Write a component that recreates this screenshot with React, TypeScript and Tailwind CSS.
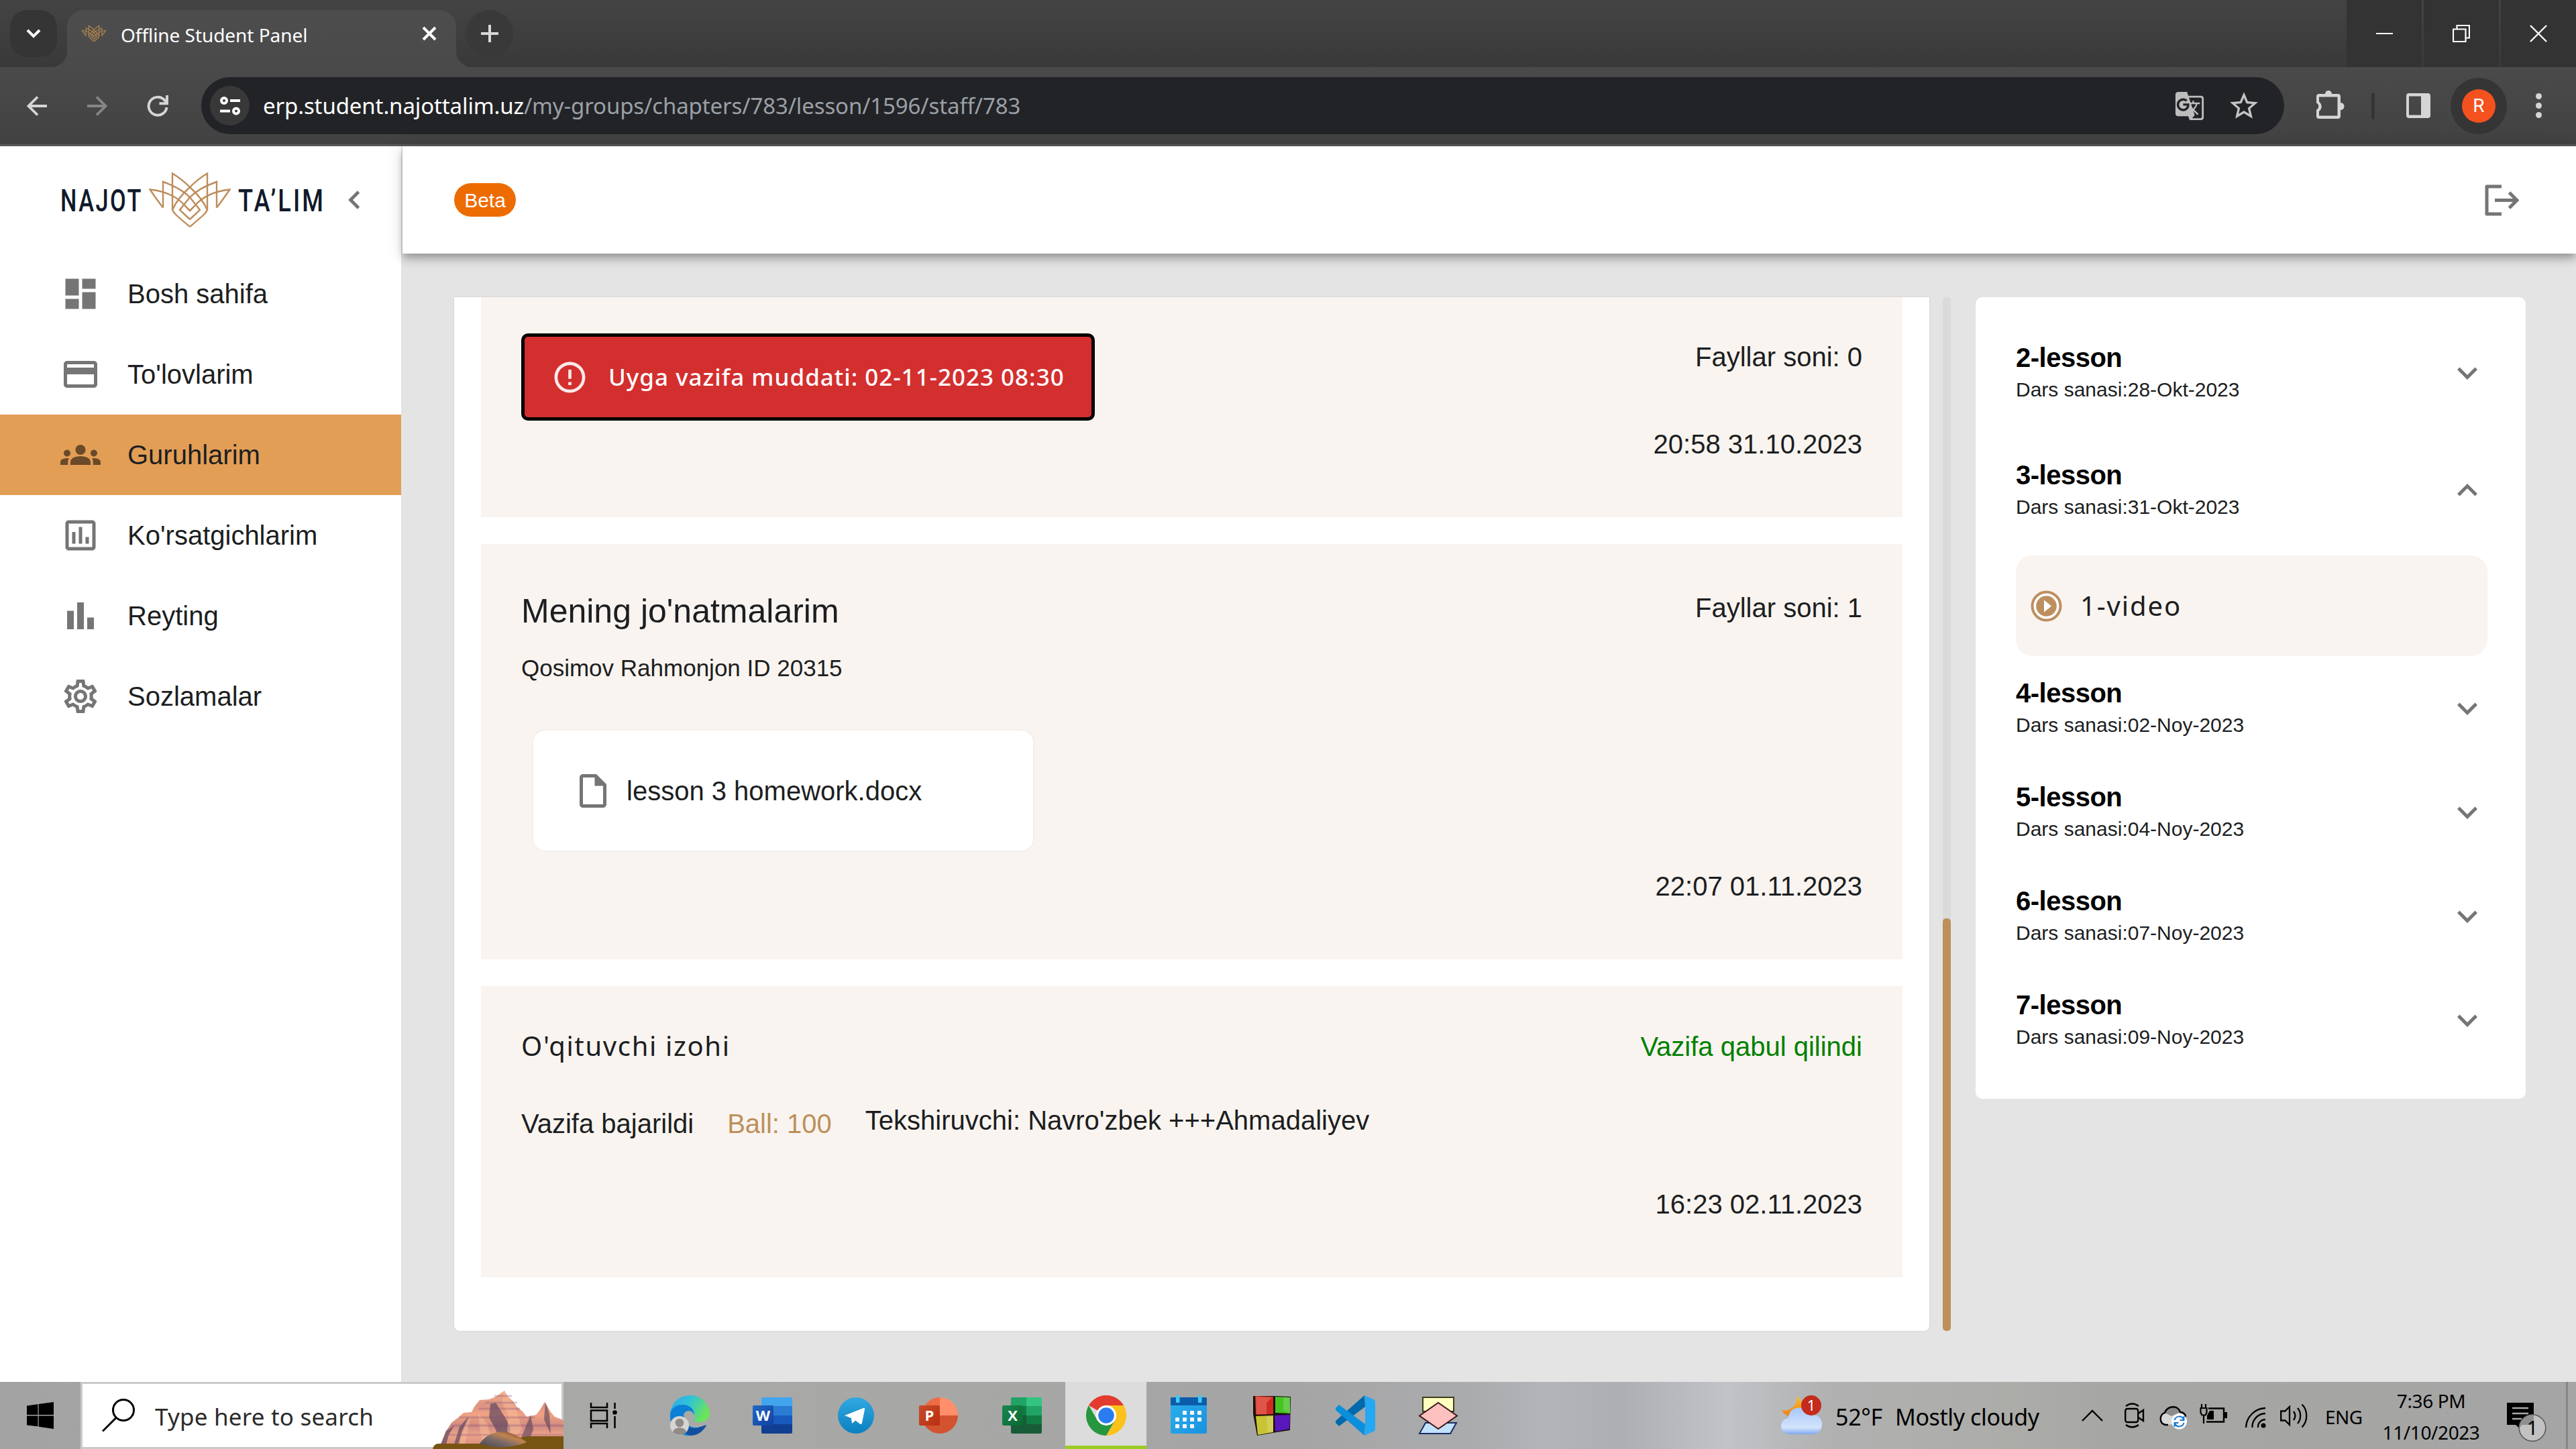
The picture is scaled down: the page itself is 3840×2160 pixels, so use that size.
import React from "react";
import {
  MdDashboard,
  MdCreditCard,
  MdGroups,
  MdOutlineInsertChartOutlined,
  MdOutlineSettings,
  MdOutlineInsertDriveFile,
  MdExpandMore,
  MdExpandLess,
  MdErrorOutline,
  MdStarBorder,
  MdGTranslate,
} from "react-icons/md";

const ui = "font-['Noto_Sans',sans-serif]";
const arial = "font-['Liberation_Sans',Arial,sans-serif]";

/* ---------- browser chrome ---------- */

function TabStrip() {
  return (
    <div className="flex h-[100px] bg-linear-to-b from-[#444444] to-[#393939] pl-[15px]">
      <div className="mt-[15px] flex size-[70px] items-center justify-center rounded-[25px] bg-[#353535]">
        <svg width="22" height="14" viewBox="0 0 22 14" fill="none" stroke="#fff" strokeWidth="4">
          <path d="M2 2l9 9 9-9" />
        </svg>
      </div>
      <div className="relative mt-[15px] ml-[15px] flex h-[85px] w-[580px] items-center rounded-t-[25px] bg-linear-to-b from-[#4d4d4d] to-[#4a4a4a] pl-[22px] text-white">
        <div className="absolute bottom-0 -left-[25px] size-[25px] bg-[radial-gradient(circle_at_0_0,transparent_25px,#4a4a4a_26px)]" />
        <div className="absolute -right-[25px] bottom-0 size-[25px] bg-[radial-gradient(circle_at_100%_0,transparent_25px,#4a4a4a_26px)]" />
        <Emblem className="mb-[15px] h-[26px] w-[36px]" stroke="#a9814f" strokeWidth={4.5} />
        <span className={`${ui} mb-[11px] ml-[22px] text-[28px] leading-[40px] tracking-[-0.05px] whitespace-nowrap`}>Offline Student Panel</span>
        <svg className="mb-[15px] ml-auto mr-[29px]" width="22" height="22" viewBox="0 0 22 22" stroke="#fff" strokeWidth="4">
          <path d="M2 2l18 18M20 2L2 20" />
        </svg>
      </div>
      <div className="mt-[15px] ml-[15px] flex size-[70px] items-center justify-center rounded-full bg-[#393939]">
        <svg width="26" height="26" viewBox="0 0 26 26" stroke="#d8d8d8" strokeWidth="4">
          <path d="M13 0v26M0 13h26" />
        </svg>
      </div>
      <div className="ml-auto flex gap-[3px]">
        <div className="flex w-[112px] items-center justify-center bg-[#333333]">
          <div className="h-[2px] w-[25px] bg-white" />
        </div>
        <div className="flex w-[112px] items-center justify-center bg-[#333333]">
          <svg width="26" height="26" viewBox="0 0 26 26" fill="none" stroke="#fff" strokeWidth="2.2">
            <path d="M1 6.5h18.5V25H1zM6.5 6.500V1H25v18.500h-5.500" />
          </svg>
        </div>
        <div className="flex w-[112px] items-center justify-center bg-[#333333]">
          <svg width="26" height="26" viewBox="0 0 26 26" stroke="#fff" strokeWidth="2.4">
            <path d="M1 1l24 24M25 1L1 25" />
          </svg>
        </div>
      </div>
    </div>
  );
}

function Toolbar() {
  return (
    <div className="flex h-[118px] items-center border-b-3 border-[#5a585a] bg-linear-to-b from-[#4a4a4a] to-[#424242]">
      <svg className="ml-[40px] shrink-0" width="30" height="30" viewBox="0 0 30 30" fill="none" stroke="#d5d5d5" strokeWidth="3.8">
        <path d="M30 15H3M16 1.500L2.500 15 16 28.500" />
      </svg>
      <svg className="ml-[60px] shrink-0" width="30" height="30" viewBox="0 0 30 30" fill="none" stroke="#868686" strokeWidth="3.8">
        <path d="M0 15h27M14 1.500L27.500 15 14 28.500" />
      </svg>
      <svg className="ml-[59px] shrink-0" width="32" height="32" viewBox="0 0 32 32" fill="none" stroke="#d5d5d5" strokeWidth="3.900">
        <path d="M29.500 18A13.500 13.500 0 1 1 25.500 6.500L29 10M30 0v12.300H18.500" />
      </svg>
      <div className="ml-[49px] flex h-[85px] w-[3105px] shrink-0 items-center rounded-full bg-[#222327] pl-[13px]">
        <div className="flex size-[59px] items-center justify-center rounded-full bg-[#383838]">
          <svg width="30" height="28" viewBox="0 0 30 28" fill="none" stroke="#fff" strokeWidth="4">
            <circle cx="6" cy="6" r="4" />
            <path d="M15 6h15M0 21.500h15" />
            <circle cx="24" cy="21.500" r="4" />
          </svg>
        </div>
        <span className={`${ui} ml-[20px] text-[33px] leading-[50px] tracking-[-0.12px] whitespace-nowrap text-[#9aa0a6]`}>
          <span className="text-white">erp.student.najottalim.uz</span>/my-groups/chapters/783/lesson/1596/staff/783
        </span>
        <MdGTranslate className="ml-auto size-[46px] text-[#bdbdbd]" />
        <MdStarBorder className="ml-[33px] mr-[35px] size-[50px] text-[#c4c4c4]" />
      </div>
      <svg className="-mt-[5px] ml-[47px] shrink-0" width="43" height="43" viewBox="0 0 43 43" fill="#d5d5d5">
        <path
          fillRule="evenodd"
          d="M5 6h9a5 5 0 0 1 10 0h9a4 4 0 0 1 4 4v9a5.500 5.500 0 0 1 0 11v9a4 4 0 0 1-4 4H5a4 4 0 0 1-4-4v-9.500a5.500 5.500 0 0 0 0-10V10a4 4 0 0 1 4-4zM5 10.500v7a9 9 0 0 1 0 14.500v6.500h27.500v-28z"
        />
      </svg>
      <div className="ml-[40px] h-[40px] w-[5px] shrink-0 rounded-full bg-[#353535]" />
      <svg className="ml-[47px] shrink-0" width="36" height="37" viewBox="0 0 36 37">
        <path fill="#d5d5d5" fillRule="evenodd" d="M4 0h28a4 4 0 0 1 4 4v29a4 4 0 0 1-4 4H4a4 4 0 0 1-4-4V4a4 4 0 0 1 4-4zm0 4.500v28h18v-28z" />
      </svg>
      <div className="ml-[30px] flex size-[84px] shrink-0 items-center justify-center rounded-full bg-[#353535]">
        <div className="flex size-[50px] items-center justify-center rounded-full bg-[#f4511e] font-[Roboto,sans-serif] text-[28px] text-white">R</div>
      </div>
      <div className="ml-[43px] flex flex-col gap-[5px]">
        <div className="size-[9px] rounded-full bg-[#d5d5d5]" />
        <div className="size-[9px] rounded-full bg-[#d5d5d5]" />
        <div className="size-[9px] rounded-full bg-[#d5d5d5]" />
      </div>
    </div>
  );
}

/* ---------- sidebar ---------- */

function Emblem({ className, stroke, strokeWidth }: { className: string; stroke: string; strokeWidth: number }) {
  const half = (
    <>
      <path d="M35 56V1.500C46 8 54 15 61 22C72 32 82 44 87 56" />
      <path d="M21 52.500V14C38 20 52 28 61 37L76 56L61 70" />
      <path d="M21 52.500C15 45 8 35 1.500 25.500C24 28 42 36 54 50L61 57L68 50" />
      <path d="M35 56C37 61 42 65 61 81" />
    </>
  );
  return (
    <svg className={className} viewBox="0 0 122 82" fill="none" stroke={stroke} strokeWidth={strokeWidth}>
      {half}
      <g transform="matrix(-1 0 0 1 122 0)">{half}</g>
    </svg>
  );
}

const BarsIcon = ({ className }: { className?: string }) => (
  <svg className={className} viewBox="0 0 24 24" fill="currentColor">
    <path d="M4 9h4v11H4zm12 4h4v7h-4zm-6-9h4v16h-4z" />
  </svg>
);

const menu = [
  { label: "Bosh sahifa", Icon: MdDashboard },
  { label: "To'lovlarim", Icon: MdCreditCard },
  { label: "Guruhlarim", Icon: MdGroups, active: true },
  { label: "Ko'rsatgichlarim", Icon: MdOutlineInsertChartOutlined },
  { label: "Reyting", Icon: BarsIcon },
  { label: "Sozlamalar", Icon: MdOutlineSettings },
];

function Sidebar() {
  return (
    <div className={`${arial} w-[598px] shrink-0 bg-white`}>
      <div className="flex h-[160px] items-center pl-[90px] font-[Roboto,sans-serif] text-[47px] leading-none font-medium text-[#0f1a2b]">
        <span className="w-[132px] origin-left scale-x-[0.73] tracking-[3.5px] whitespace-nowrap">NAJOT</span>
        <Emblem className="h-[82px] w-[122px]" stroke="#bd8d5b" strokeWidth={2.4} />
        <span className="ml-[11px] w-[164px] origin-left scale-x-[0.77] tracking-[4px] whitespace-nowrap">TA’LIM</span>
        <svg width="17" height="28" viewBox="0 0 17 28" fill="none" stroke="#757575" strokeWidth="4.800">
          <path d="M15.500 2L3.500 14l12 12" />
        </svg>
      </div>
      {menu.map(({ label, Icon, active }) => (
        <div key={label} className={`flex h-[120px] items-center pl-[90px] text-[40px] text-[#1c1e21] ${active ? "bg-[#e39e56]" : ""}`}>
          <Icon className={`size-[60px] ${active ? "text-[#6a4a28]" : "text-[#757575]"}`} />
          <span className="ml-[40px]">{label}</span>
        </div>
      ))}
    </div>
  );
}

/* ---------- main content ---------- */

function Submissions() {
  return (
    <div className="h-[1541px] w-[2199px] rounded-b-[8px] bg-white px-[40px] text-[40px] leading-[60px] text-[#1c1e21] shadow-[0_0_3px_rgba(0,0,0,0.12)]">
      <div className="flex h-[328px] justify-between bg-[#f9f4f0] pr-[60px] pl-[60px]">
        <div className="mt-[54px] flex h-[130px] w-[855px] items-center rounded-[10px] border-5 border-black bg-[#d32f2f] pl-[40px]">
          <MdErrorOutline className="size-[55px] text-white/90" />
          <span className={`${ui} ml-[30px] text-[35px] font-medium tracking-[1px] whitespace-nowrap text-white`}>
            Uyga vazifa muddati: 02-11-2023 08:30
          </span>
        </div>
        <div className="flex flex-col items-end gap-[70px] pt-[59px]">
          <span>Fayllar soni: 0</span>
          <span>20:58 31.10.2023</span>
        </div>
      </div>

      <div className="mt-[40px] flex h-[619px] justify-between bg-[#f9f4f0] pr-[60px] pl-[60px]">
        <div className="pt-[60px]">
          <div className="text-[50px] leading-[80px]">Mening jo'natmalarim</div>
          <div className="mt-[20px] text-[35px] leading-[50px]">Qosimov Rahmonjon ID 20315</div>
          <div className="mt-[66px] ml-[16px] flex h-[183px] w-[749px] items-center rounded-[20px] border-2 border-[#f2f0ee] bg-white pl-[59px]">
            <MdOutlineInsertDriveFile className="size-[60px] text-[#757575]" />
            <span className="ml-[20px]">lesson 3 homework.docx</span>
          </div>
        </div>
        <div className="flex flex-col items-end gap-[355px] pt-[65px]">
          <span>Fayllar soni: 1</span>
          <span>22:07 01.11.2023</span>
        </div>
      </div>

      <div className="mt-[40px] flex h-[434px] justify-between bg-[#f9f4f0] pr-[60px] pl-[60px]">
        <div className="pt-[59px]">
          <div className={`${ui} tracking-[1.65px]`}>O'qituvchi izohi</div>
          <div className="mt-[51px] flex">
            <span className="mt-[5px]">Vazifa bajarildi</span>
            <span className="mt-[5px] ml-[50px] text-[#bd905c]">Ball: 100</span>
            <span className="ml-[50px]">Tekshiruvchi: Navro'zbek +++Ahmadaliyev</span>
          </div>
        </div>
        <div className="flex flex-col items-end gap-[175px] pt-[60px]">
          <span className="text-[#008000]">Vazifa qabul qilindi</span>
          <span>16:23 02.11.2023</span>
        </div>
      </div>
    </div>
  );
}

function LessonRow({ n, date, open }: { n: number; date: string; open?: boolean }) {
  const Chevron = open ? MdExpandLess : MdExpandMore;
  return (
    <div className="flex h-[93px] justify-between">
      <div>
        <div className="text-[40px] leading-[50px] font-bold tracking-[-0.5px] text-black">{n}-lesson</div>
        <div className="mt-[3px] text-[30px] leading-[40px] text-[#1c1e21]">Dars sanasi:{date}</div>
      </div>
      <Chevron className="mt-[18px] size-[60px] text-[#757575]" />
    </div>
  );
}

function Lessons() {
  return (
    <div className="h-[1195px] w-[820px] rounded-[10px] bg-white pt-[65px] pr-[57px] pl-[60px]">
      <LessonRow n={2} date="28-Okt-2023" />
      <div className="mt-[82px]">
        <LessonRow n={3} date="31-Okt-2023" open />
        <div className="mt-[52px] mb-[30px] flex h-[150px] items-center rounded-[25px] bg-[#f9f4f0] pl-[22px]">
          <svg width="47" height="47" viewBox="0 0 47 47">
            <circle cx="23.500" cy="23.500" r="21" fill="#fff" stroke="#bd8f5f" strokeWidth="4" />
            <circle cx="23.500" cy="23.500" r="15.300" fill="#bd8f5f" />
            <path d="M20 14.500l11 9-11 9z" fill="#fff" />
          </svg>
          <span className={`${ui} ml-[27px] text-[40px] tracking-[1.9px] text-[#1c1e21]`}>1-video</span>
        </div>
      </div>
      <div className="flex flex-col gap-[62px]">
        <LessonRow n={4} date="02-Noy-2023" />
        <LessonRow n={5} date="04-Noy-2023" />
        <LessonRow n={6} date="07-Noy-2023" />
        <LessonRow n={7} date="09-Noy-2023" />
      </div>
    </div>
  );
}

function Content() {
  return (
    <div className={`${arial} relative flex-1 bg-[#e4e4e4]`}>
      <div className="relative ml-[2px] flex h-[160px] items-center justify-between bg-white pr-[85px] pl-[77px] shadow-[0_5px_10px_-2px_rgba(0,0,0,0.2),0_10px_12px_rgba(0,0,0,0.14),0_2px_25px_rgba(0,0,0,0.12)]">
        <div className="flex h-[50px] w-[92px] items-center justify-center rounded-full bg-[#ed6c02] text-[30px] text-white">Beta</div>
        <svg width="53" height="48" viewBox="0 0 53 48" fill="none" stroke="#757575" strokeWidth="5">
          <path d="M27 4H5v41h22" strokeLinejoin="round" />
          <path d="M17 24.500h33M38.500 13l11.500 11.500L38.500 36" />
        </svg>
      </div>
      <div className="mt-[65px] ml-[79px] flex items-start">
        <Submissions />
        <div className="ml-[20px] flex h-[1541px] w-[12px] flex-col justify-end rounded-[5px] bg-[#dadada]">
          <div className="h-[615px] rounded-[5px] bg-[#bd8f5b]" />
        </div>
        <div className="ml-[37px]">
          <Lessons />
        </div>
      </div>
    </div>
  );
}

/* ---------- taskbar ---------- */

function Mountains() {
  return (
    <svg width="195" height="87" viewBox="0 0 195 87">
      <defs>
        <linearGradient id="rock" x1="0" y1="0" x2="0" y2="1">
          <stop offset="0" stopColor="#f8b088" />
          <stop offset=".25" stopColor="#dc9484" />
          <stop offset=".4" stopColor="#f0a284" />
          <stop offset=".6" stopColor="#d08a80" />
          <stop offset=".75" stopColor="#eea48a" />
          <stop offset="1" stopColor="#cc8478" />
        </linearGradient>
        <linearGradient id="boulder" x1="0" y1="1" x2="1" y2="0">
          <stop offset="0" stopColor="#4a4550" />
          <stop offset=".4" stopColor="#7a6a68" />
          <stop offset=".65" stopColor="#c08450" />
          <stop offset="1" stopColor="#6a3416" />
        </linearGradient>
      </defs>
      <path d="M12 80L20 60 28 48 38 40 46 33l12-1 4-8 8-10 14-1 8-3 5-3L107 0l4 8 8 7 6 9 9 7 6 8 14-3 5-6 8-13 9 15 6 7 13 5v44z" fill="url(#rock)" />
      <path d="M12 80L20 60l12-8-8 14-4 14zM54 38l-10 22-6 20h-6l8-26zM86 20l-2 20 10 18 6 24 12-4 4-22-8-16-14-22z" fill="#4a3a56" opacity=".6" />
      <path d="M107 0l-4 18 10 18-2 26 16 4 6-10-10-32zM68 34l2 20 4 26h14l-6-30zM56 40l-8 40h-8l8-28z" fill="#f8bc98" opacity=".55" />
      <path d="M146 36l-14 34 10 8 8-20zM168 17l-2 26 10 22-2-30z" fill="#4a3a56" opacity=".55" />
      <path d="M92 8h26M78 18h48M68 27h62M40 40h112M28 52h167M22 66h172" stroke="#84507a" strokeWidth="3" opacity=".3" />
      <path d="M0 87c2-6 4-8 10-8h80l50-11h55v19z" fill="#785412" />
      <path d="M70 79c10-14 24-19 40-17 12 2 22 8 30 15-14 6-34 8-46 7s-18-3-24-5z" fill="url(#boulder)" />
    </svg>
  );
}

function EdgeIcon() {
  return (
    <svg width="60" height="60" viewBox="0 0 60 60">
      <defs>
        <linearGradient id="edgeTop" x1="0" y1="0" x2="1" y2=".4">
          <stop offset="0" stopColor="#2ea6ee" />
          <stop offset=".5" stopColor="#2fc3d6" />
          <stop offset="1" stopColor="#6be35c" />
        </linearGradient>
      </defs>
      <path d="M1 30a30 30 0 0 1 13-9c10-2 21 2 24 10 1 3-2 4-2 6 1 3 6 3 11 3 8-1 13-6 13-13C59 11 46 0 31 0 12 0 1 14 1 30z" fill="url(#edgeTop)" />
      <path d="M1 30c0-10 8-16 18-16 12 0 18 7 18 16-1-4-4-7-8-7-6 0-9 5-8 11 2 12 15 17 29 12-6 9-13 14-21 14C13 60 0 46 1 30z" fill="#0c7fd6" />
      <path d="M22 30c-3 14 10 23 24 17 6-2 9-4 9-2-6 10-14 15-24 15C20 58 13 42 22 30z" fill="#12509e" />
      <circle cx="15" cy="45" r="14" fill="#d5d5d3" />
      <circle cx="15" cy="41" r="6.300" fill="#8f8b87" />
      <path d="M5 55c1-9 19-9 20 0-5 5-14 5-20 0z" fill="#8f8b87" />
    </svg>
  );
}

function OfficeBadge({ letter, from, to, id }: { letter: string; from: string; to: string; id: string }) {
  return (
    <>
      <defs>
        <linearGradient id={id} x1="0" y1="0" x2="1" y2="1">
          <stop offset="0" stopColor={from} />
          <stop offset="1" stopColor={to} />
        </linearGradient>
      </defs>
      <rect x="0" y="12" width="31" height="30" rx="2" fill={`url(#${id})`} />
      <text x="15.500" y="35" textAnchor="middle" fontFamily="Open Sans" fontWeight="700" fontSize="22" fill="#fff">
        {letter}
      </text>
    </>
  );
}

function WordIcon() {
  return (
    <svg width="59" height="54" viewBox="0 0 59 54">
      <path d="M15 0h42a2 2 0 0 1 2 2v11H13V2a2 2 0 0 1 2-2z" fill="#41a5ee" />
      <path d="M13 13h46v14H13z" fill="#2b7cd3" />
      <path d="M13 27h46v13H13z" fill="#185abd" />
      <path d="M13 40h46v12a2 2 0 0 1-2 2H15a2 2 0 0 1-2-2z" fill="#103f91" />
      <OfficeBadge letter="W" from="#2368c4" to="#0f41a3" id="wordBadge" />
    </svg>
  );
}

function TelegramIcon() {
  return (
    <svg width="54" height="54" viewBox="0 0 54 54">
      <defs>
        <linearGradient id="tg" x1="0" y1="0" x2="0" y2="1">
          <stop offset="0" stopColor="#33a8e2" />
          <stop offset="1" stopColor="#0a80bf" />
        </linearGradient>
      </defs>
      <circle cx="27" cy="27" r="27" fill="url(#tg)" />
      <path d="M10 27l28-11c1.500-.5 2.300.3 2 2l-4 20c-.4 2-1.500 2.500-3.300 1.400L26 34.500l-3.500 3.600c-.8.7-1.600.5-1.700-.6L20 31z" fill="#fff" />
    </svg>
  );
}

function PowerPointIcon() {
  return (
    <svg width="59" height="54" viewBox="0 0 59 54">
      <path d="M31 0a27 27 0 0 0-27 27h27z" fill="#ed6c47" />
      <path d="M31 0a27 27 0 0 1 27 27H31z" fill="#ff8f6b" />
      <path d="M4 27a27 27 0 0 0 54 0z" fill="#d35230" />
      <OfficeBadge letter="P" from="#ca4c28" to="#b72f12" id="pptBadge" />
    </svg>
  );
}

function ExcelIcon() {
  return (
    <svg width="59" height="54" viewBox="0 0 59 54">
      <path d="M15 0h21v13H13V2a2 2 0 0 1 2-2z" fill="#21a366" />
      <path d="M36 0h21a2 2 0 0 1 2 2v11H36z" fill="#33c481" />
      <path d="M13 13h23v14H13zM36 27h23v13H36z" fill="#107c41" />
      <path d="M36 13h23v14H36z" fill="#21a366" />
      <path d="M13 27h23v13h23v12a2 2 0 0 1-2 2H15a2 2 0 0 1-2-2z" fill="#185c37" />
      <OfficeBadge letter="X" from="#18884f" to="#0b6731" id="xlBadge" />
    </svg>
  );
}

function ChromeIcon() {
  return (
    <svg width="60" height="60" viewBox="0 0 60 60">
      <path d="M30 30L4 15a30 30 0 0 1 52 0z" fill="#e33b2e" />
      <path d="M30 15h26A30 30 0 0 1 30 60l13-22.500z" fill="#fcc21b" />
      <path d="M4 15l13 22.500L30 45l13-7.500L30 60A30 30 0 0 1 4 15z" fill="#26963f" />
      <circle cx="30" cy="30" r="15" fill="#fff" />
      <circle cx="30" cy="30" r="11.800" fill="#2b7cf0" />
    </svg>
  );
}

function CalendarIcon() {
  const dots = [
    [19, 23], [30, 23], [41, 23],
    [8, 33], [19, 33], [30, 33], [41, 33],
    [8, 43], [19, 43], [30, 43],
  ];
  return (
    <svg width="54" height="57" viewBox="0 0 54 57">
      <defs>
        <linearGradient id="cal" x1="0" y1="0" x2="1" y2="1">
          <stop offset="0" stopColor="#2bb0ec" />
          <stop offset="1" stopColor="#1a91e0" />
        </linearGradient>
      </defs>
      <rect y="3" width="54" height="54" rx="2" fill="url(#cal)" />
      <path d="M2 3h50a2 2 0 0 1 2 2v10H0V5a2 2 0 0 1 2-2z" fill="#0c5cab" />
      <rect x="8" width="5.500" height="11" rx="1" fill="#3ccbf4" />
      <rect x="41" width="5.500" height="11" rx="1" fill="#3ccbf4" />
      {dots.map(([x, y]) => (
        <rect key={`${x}-${y}`} x={x - 1} y={y} width="6" height="6" rx="1" fill="#f4f4f4" />
      ))}
    </svg>
  );
}

function BlocksIcon() {
  return (
    <svg width="57" height="60" viewBox="0 0 57 60">
      <path d="M0 1h34l22 1-1 50-20 3-29 5L0 28z" fill="#1a120c" />
      <path d="M3 1l27 1v26l-26 1z" fill="#cf2c22" />
      <path d="M4 2l24 1-8 8v17H5z" fill="#f08070" opacity=".5" />
      <path d="M33 2l22 1v24l-22-1z" fill="#45c422" />
      <path d="M4 31l26-1v25L7 59z" fill="#c8c434" />
      <path d="M32 30l23-1-1 21-21 4z" fill="#5a17bd" />
      <path d="M45 3h10v24l-10-5zM20 32h10v22l-8 1z" fill="#fff" opacity=".18" />
    </svg>
  );
}

function VsCodeIcon() {
  return (
    <svg width="60" height="60" viewBox="0 0 60 60">
      <path d="M44 0L1 38v3l5 5L45 17z" fill="#0069ac" />
      <path d="M6 14l-5 5v3l43 38 1-17z" fill="#0a8fdc" />
      <path d="M44 0l13 6c2 1 3 2 3 4v40c0 2-1 3-3 4l-13 6c1-1 1-2 1-4V4c0-2 0-3-1-4z" fill="#25a8f3" />
    </svg>
  );
}

function FlowIcon() {
  return (
    <svg width="60" height="56" viewBox="0 0 60 56" strokeWidth="2">
      <path d="M7 1h46v21H7z" fill="#ffffc0" stroke="#3c3c1c" />
      <path d="M11 39h46l-9 16H2z" fill="#c2e2ff" stroke="#1a2e60" />
      <path d="M30 9l28 19.500L30 48 2 28.500z" fill="#ffc0c0" stroke="#3c1a1a" />
    </svg>
  );
}

function WeatherIcon() {
  return (
    <svg className="overflow-visible" width="64" height="60" viewBox="0 0 64 60">
      <defs>
        <linearGradient id="moon" x1="0" y1="0" x2="0" y2="1">
          <stop offset="0" stopColor="#f6c12d" />
          <stop offset="1" stopColor="#ef7d1a" />
        </linearGradient>
        <linearGradient id="cloud" x1="0" y1="0" x2="0" y2="1">
          <stop offset="0" stopColor="#a8c8fb" />
          <stop offset=".75" stopColor="#d3e4fb" />
          <stop offset="1" stopColor="#7fa8ee" />
        </linearGradient>
      </defs>
      <path d="M24 1c8 6 9 16 3 24-6 9-18 9-27-3 12 3 25-6 24-21z" fill="url(#moon)" />
      <path d="M11 34C12 14 38 14 44 31c9-4 17 2 17 12 0 9-6 15-14 15H13C5 58 0 53 0 46s5-12 11-12z" fill="url(#cloud)" />
      <circle cx="45" cy="15" r="15" fill="#c42b1c" />
      <text x="45" y="23" textAnchor="middle" fontFamily="Noto Sans" fontSize="22" fill="#fff">
        1
      </text>
    </svg>
  );
}

function Tray() {
  return (
    <div className="flex h-[100px] items-center">
      <svg width="32" height="18" viewBox="0 0 32 18" fill="none" stroke="#000" strokeWidth="2.400">
        <path d="M1 17L16 2l15 15" />
      </svg>
      <svg className="ml-[32px]" width="30" height="38" viewBox="0 0 30 38" fill="none" stroke="#000" strokeWidth="2.400">
        <rect x="1.200" y="9" width="19" height="20" rx="3" />
        <path d="M20.500 16l7.500-5v16l-7.500-5M2 5c6-4.500 13-4.500 19 0M2 33c6 4.500 13 4.500 19 0" />
      </svg>
      <svg className="mt-[6px] ml-[22px]" width="42" height="36" viewBox="0 0 42 36">
        <path d="M9 29C-1 27 0 13 8 11 12 0 28-1 31 10c9 1 10 12 4 17" fill="#d8d8d8" />
        <path d="M8 11C12 0 28-1 31 10L18 16z" fill="#8c8c8c" />
        <path d="M13 29H9C-1 27 0 13 8 11 12 0 28-1 31 10c4 0 8 3 8 7" fill="none" stroke="#000" strokeWidth="2.400" />
        <circle cx="29.500" cy="24" r="11.500" fill="#fff" />
        <path d="M22.500 22c2-7 11-7 13.500-1m.5-5v6h-6M36.500 26c-2 7-11 7-13.500 1m-.5 5v-6h6" fill="none" stroke="#1577cc" strokeWidth="2" />
      </svg>
      <svg className="-mt-[4px] ml-[18px]" width="41" height="30" viewBox="0 0 41 30">
        <path d="M13 6.500h23v20H10" fill="none" stroke="#000" strokeWidth="2.400" />
        <path d="M37 12h4v9h-4zM15 10h6v13H11V17z" />
        <path d="M3 0v6M9 0v6M1.500 6h9v7l-2 3.500h-5l-2-3.500zM6 16v13" fill="none" stroke="#000" strokeWidth="2.200" />
      </svg>
      <svg className="mt-[6px] ml-[26px]" width="32" height="32" viewBox="0 0 32 32" fill="none" stroke="#000" strokeWidth="2.300">
        <circle cx="28" cy="28" r="3.500" fill="#000" stroke="none" />
        <path d="M20 31a11 11 0 0 1 11-12M11.500 31A20 20 0 0 1 31 10M2 31A30 30 0 0 1 31 2" />
      </svg>
      <svg className="ml-[21px]" width="42" height="36" viewBox="0 0 42 36" fill="none" stroke="#000" strokeWidth="2.300">
        <path d="M1.200 11.500h6L14 5v27l-6.500-6.500H1.200zM20 12c3 4 3 9 0 13M26 7c5.500 6 5.500 17 0 23M32.500 1.500c9 9 9 25 0 34" />
      </svg>
      <span className={`${ui} mt-[3px] ml-[25px] w-[60px] text-[28px] tracking-[-0.6px]`}>ENG</span>
      <div className={`${ui} mt-[4px] ml-[14px] flex w-[168px] flex-col items-center text-[28px] leading-[47px] whitespace-nowrap tracking-[-0.4px]`}>
        <span>7:36 PM</span>
        <span>11/10/2023</span>
      </div>
      <svg className="mt-[22px] ml-[28px]" width="62" height="62" viewBox="0 0 62 62">
        <path d="M1 1h40v33H24v9L14 34H1z" />
        <path d="M9 9h24M9 17h24M9 25h14" stroke="#a7a7a7" strokeWidth="2.400" />
        <circle cx="39" cy="38.500" r="19.800" fill="#c2c2c2" stroke="#555" strokeWidth="1.500" />
        <path d="M20 38A19 19 0 0 1 41 20v14H24z" fill="#8f8f8f" />
        <text x="39" y="49" textAnchor="middle" fontFamily="Noto Sans" fontSize="29">
          1
        </text>
      </svg>
      <div className="ml-[27px] h-[100px] w-[3px] bg-[#868686]" />
    </div>
  );
}

function Taskbar() {
  return (
    <div className="flex h-[100px] items-center bg-[linear-gradient(90deg,#a3a3a3_0%,#a9a9a7_25%,#a5a5a5_50%,#aaabad_57%,#b3b4b8_60%,#adafb3_63%,#c1c3c8_67%,#b1b1b1_71%,#acaca9_78%,#a6a6a4_82%,#a5a5a5_100%)] text-black">
      <svg className="ml-[40px]" width="40" height="40" viewBox="0 0 40 40">
        <path d="M0 5.500l16.500-2.300v15.900H0zM17.700 3L40 0v19.100H17.700zM0 20.500h16.500v15.800L0 34.500zM17.700 20.500H40V40l-22.300-3.200z" />
      </svg>
      <div className="relative ml-[40px] flex h-[100px] w-[720px] items-center border-3 border-[#cacaca] bg-white pl-[29px]">
        <svg width="50" height="50" viewBox="0 0 50 50" fill="none" stroke="#000" strokeWidth="3">
          <circle cx="32" cy="17" r="15.500" />
          <path d="M21.500 28L1 48.500" />
        </svg>
        <span className={`${ui} mt-[5px] ml-[29px] text-[35px] tracking-[0.2px] whitespace-nowrap text-[#2b2b2b]`}>Type here to search</span>
        <div className="absolute -right-[3px] -bottom-[3px]">
          <Mountains />
        </div>
      </div>
      <svg className="ml-[39px]" width="41" height="40" viewBox="0 0 41 40" fill="none" stroke="#000" strokeWidth="2.500">
        <path d="M2 1v7h24V1M2 39v-7h24v7M2 12.500h24v15.500H2zM37.500 1v9M37.500 21v18" />
        <circle cx="37.500" cy="15.500" r="3.300" fill="#000" stroke="none" />
      </svg>
      <div className="ml-[78px]"><EdgeIcon /></div>
      <div className="ml-[64px]"><WordIcon /></div>
      <div className="ml-[68px]"><TelegramIcon /></div>
      <div className="ml-[67px]"><PowerPointIcon /></div>
      <div className="ml-[65px]"><ExcelIcon /></div>
      <div className="ml-[35px] flex h-[100px] w-[121px] items-center justify-center border-b-5 border-[#9acc26] bg-[#dcdcdc] pt-[5px]">
        <ChromeIcon />
      </div>
      <div className="mb-[3px] ml-[36px]"><CalendarIcon /></div>
      <div className="ml-[69px]"><BlocksIcon /></div>
      <div className="ml-[65px]"><VsCodeIcon /></div>
      <div className="ml-[64px]"><FlowIcon /></div>
      <div className="ml-auto flex w-[1185px] items-center">
        <WeatherIcon />
        <span className={`${ui} mt-[4px] ml-[17px] w-[89px] text-[34px] tracking-[-0.3px] whitespace-nowrap`}>52°F</span>
        <span className={`${ui} mt-[4px] w-[278px] text-[34px] tracking-[-0.4px] whitespace-nowrap`}>Mostly cloudy</span>
        <Tray />
      </div>
    </div>
  );
}

export default function App() {
  return (
    <div className="flex h-[2160px] w-[3840px] flex-col overflow-hidden bg-white">
      <TabStrip />
      <Toolbar />
      <div className="flex h-[1842px]">
        <Sidebar />
        <Content />
      </div>
      <Taskbar />
    </div>
  );
}
